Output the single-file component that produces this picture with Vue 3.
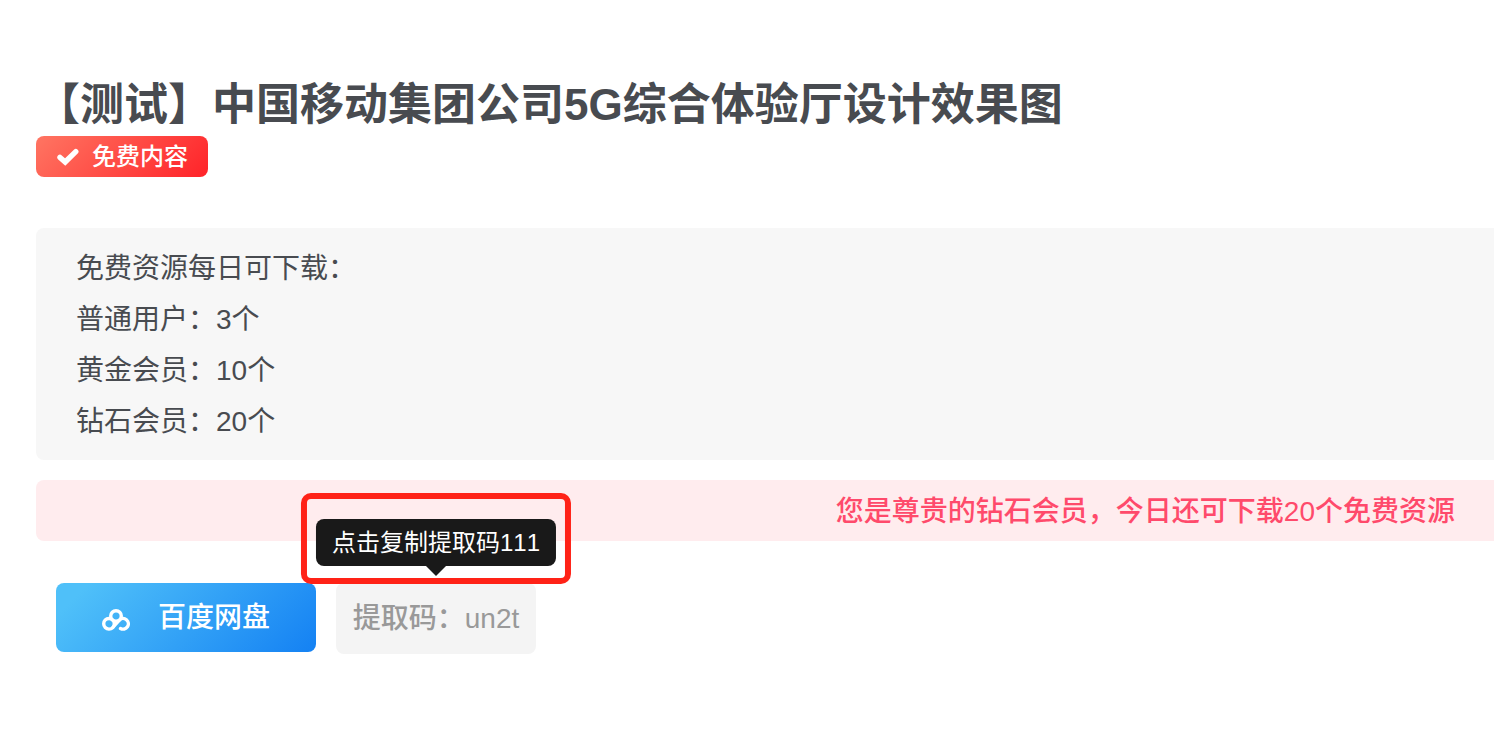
<script setup>
import { ref } from 'vue'

const title = '【测试】中国移动集团公司5G综合体验厅设计效果图'
const limits = ref([
  { name: '普通用户', count: 3 },
  { name: '黄金会员', count: 10 },
  { name: '钻石会员', count: 20 }
])
const remaining = ref(20)
const code = ref('un2t')

const copyCode = () => {
  navigator.clipboard?.writeText(code.value)
}
</script>

<template>
  <main class="resource">
    <h1 class="title">{{ title }}</h1>
    <span class="badge">
      <svg class="badge-icon" width="24" height="24" viewBox="0 0 24 24" fill="none" stroke="currentColor" stroke-width="5.4" aria-hidden="true">
        <path d="M4 12.4 9.2 17 19.8 6.6" stroke-linecap="round" stroke-linejoin="miter"></path>
      </svg>
      免费内容
    </span>

    <section class="limits">
      <p>免费资源每日可下载：</p>
      <p v-for="item in limits" :key="item.name">{{ item.name }}：{{ item.count }}个</p>
    </section>

    <p class="notice">您是尊贵的钻石会员，今日还可下载{{ remaining }}个免费资源</p>

    <div class="actions">
      <a class="pan" href="#">
        <svg class="pan-icon" width="28" height="22" viewBox="0 0 28 22" fill="none" stroke="currentColor" stroke-width="3.4" stroke-linecap="round" aria-hidden="true">
          <circle cx="14" cy="7" r="5.3"></circle>
          <circle cx="7" cy="14.8" r="5.3"></circle>
          <path d="M10.8 18.5 17.3 11.1a5.3 5.3 0 1 1 1.2 8.4"></path>
        </svg>
        百度网盘
      </a>
      <div class="code-wrap">
        <button class="code" type="button" aria-describedby="code-tip" @click="copyCode">提取码：{{ code }}</button>
        <div class="highlight">
          <div id="code-tip" class="tip" role="tooltip">点击复制提取码111</div>
        </div>
      </div>
    </div>
  </main>
</template>

<style>
body {
  margin: 0;
  background: #fff;
}
</style>

<style scoped>
.resource {
  padding: 74px 0 72px 36px;
  overflow-x: hidden;
  font-family: "Liberation Sans", "Noto Sans CJK SC", sans-serif;
  font-size: 28px;
  font-kerning: none;
  color: #484b50;
}

.title {
  margin: 0;
  font-size: 44px;
  line-height: 62px;
  font-weight: 700;
}

.badge {
  display: flex;
  align-items: center;
  gap: 12px;
  width: fit-content;
  padding: 0 20px;
  border-radius: 8px;
  background: linear-gradient(135deg, #ff7562, #ff2329);
  color: #fff;
  font-size: 24px;
  line-height: 41px;
  font-weight: 500;
}

.limits {
  margin-top: 51px;
  padding: 15px 40px 13px;
  border-radius: 8px 0 0 8px;
  background: #f7f7f7;
  line-height: 51px;
}

.limits p {
  margin: 0;
}

.notice {
  margin: 20px 0 0;
  padding: 2px 39px 0;
  border-radius: 8px 0 0 8px;
  background: #ffecee;
  color: #ff4a6b;
  line-height: 59px;
  font-weight: 500;
  text-align: right;
}

.actions {
  display: flex;
  align-items: flex-start;
  gap: 20px;
  margin-top: 42px;
  padding-left: 20px;
}

.pan {
  display: flex;
  align-items: center;
  gap: 28px;
  padding: 0 46px;
  border-radius: 8px;
  background: linear-gradient(135deg, #4fc0f9 10%, #1481f3);
  color: #fff;
  line-height: 69px;
  font-weight: 500;
  text-decoration: none;
}

.pan-icon {
  margin-top: 4px;
}

.code-wrap {
  position: relative;
}

.code {
  min-width: 200px;
  padding: 0 16px;
  border: 0;
  border-radius: 8px;
  background: #f4f4f4;
  color: #999;
  font: inherit;
  font-weight: 500;
  line-height: 71px;
  cursor: pointer;
}

.highlight {
  position: absolute;
  bottom: 70px;
  left: 50%;
  transform: translateX(-50%);
  padding: 20px 9px 12px;
  border: 6px solid #ff2217;
  border-radius: 10px;
}

.tip {
  position: relative;
  padding: 0 16px;
  border-radius: 8px;
  background: #191919;
  color: #fff;
  font-size: 24px;
  line-height: 47px;
  white-space: nowrap;
}

.tip::after {
  content: "";
  position: absolute;
  top: 100%;
  left: 50%;
  margin-left: -10px;
  border: 10px solid transparent;
  border-bottom-width: 0;
  border-top-color: #191919;
}
</style>
